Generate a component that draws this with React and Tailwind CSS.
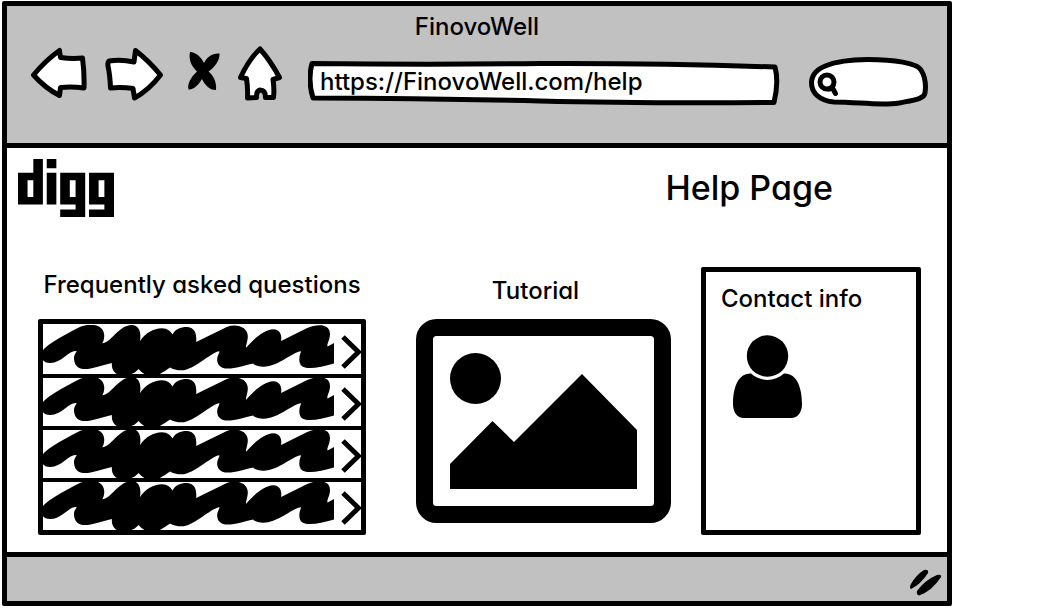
import { FaDigg } from "react-icons/fa";

const questions = ["Question 1", "Question 2", "Question 3", "Question 4"];

const outline = {
  fill: "#fff",
  stroke: "#000",
  strokeWidth: 5,
  strokeLinejoin: "round",
  strokeLinecap: "round",
};

function BackIcon() {
  return (
    <svg viewBox="31 46 57 56" className="h-14 w-[57px]" aria-hidden="true">
      <path {...outline} d="M33.500 75 Q46 60 59.500 50.500 L60.500 57.500 Q72 59 82.500 58 Q84.500 73 84 88 Q72 86.500 60.500 87.500 L59.500 95.500 Q45 88 33.500 75Z" />
    </svg>
  );
}

function ForwardIcon() {
  return (
    <svg viewBox="104 46 60 56" className="h-14 w-[60px]" aria-hidden="true">
      <path {...outline} d="M109 61 Q121 59 134 62 L135.500 50.500 Q149 61 160.500 75 Q149 90 134.500 98 L133 88.500 Q122 87 110.500 88 Q110 75 108 66 Q107.500 62 109 61Z" />
    </svg>
  );
}

function StopIcon() {
  return (
    <svg viewBox="180 46 40 56" className="h-14 w-10" aria-hidden="true">
      <path d="M190 52 C196 52 201 57 204 63 C207 57 212 53 219.500 53.500 C220 60 215 67 208.500 71.500 C213 75 217 82 216 90 C209 90 205 85 202 79 C199 84 194 90 188.500 89.500 C187 84 191 77 197 71.500 C191 66 188.500 59 190 52Z" />
    </svg>
  );
}

function HomeIcon() {
  return (
    <svg viewBox="236 46 48 56" className="h-14 w-12" aria-hidden="true">
      <path {...outline} d="M260 49 Q270 60 279.500 77.500 L273 79.500 Q274.500 89 273.500 97.500 L265.500 97.500 Q265.500 90 260 90 Q256 91 256.500 97.500 L247.500 98 Q248 88 246.500 78.500 L240.500 77.500 Q249 59 260 49Z" />
    </svg>
  );
}

function Scribble() {
  return (
    <svg viewBox="38 197 874 154" preserveAspectRatio="none" className="h-[51px] min-w-0 flex-1" aria-hidden="true">
      <path d="M36 275 C50 255 100 228 150 202 C190 188 222 200 222 230 C222 242 217 250 216 252 C245 250 262 199 305 197 C327 198 334 220 329 246 C345 222 370 207 395 207 C412 207 422 217 427 226 C435 208 455 202 472 203 C495 205 500 225 498 248 L590 203 C622 191 656 205 653 235 C652 250 646 260 648 266 C670 240 700 212 730 210 C750 211 756 227 753 245 L830 207 C862 193 900 193 900 225 C899 245 889 256 893 262 L912 251 L912 313 C880 322 850 329 828 326 C812 324 807 312 808 298 C808 287 814 278 813 276 C790 277 745 322 700 323 C685 323 672 317 669 313 C640 319 610 331 585 328 C568 326 561 315 561 300 C561 288 571 278 567 276 C545 278 490 333 455 334 C440 334 427 330 420 325 C400 338 385 351 360 351 C345 350 334 340 325 330 C315 342 300 350 275 349 C252 347 243 330 245 312 C210 320 180 332 160 330 C140 328 131 315 131 295 C132 284 138 280 139 276 C115 273 95 312 60 312 C45 312 38 306 36 300Z" />
    </svg>
  );
}

function Chevron() {
  return (
    <svg viewBox="0 0 20 34" className="mt-1 ml-[7px] h-[34px] w-5 shrink-0" aria-hidden="true">
      <path d="M2 2 L17.500 17 L2 32" fill="none" stroke="#000" strokeWidth="5" />
    </svg>
  );
}

function Picture() {
  return (
    <svg viewBox="0 0 255 204" className="h-auto w-full" role="img" aria-label="Tutorial picture">
      <rect x="8.500" y="8.500" width="238" height="187" rx="12" fill="#fff" stroke="#000" strokeWidth="17" />
      <circle cx="59.500" cy="59.500" r="25.500" />
      <path d="M34 145 L76.500 102 L98 123 L166 55 L221 111 V170 H34Z" />
    </svg>
  );
}

function Person() {
  return (
    <svg viewBox="0 0 69 83" className="ml-3 h-[83px] w-[69px]" role="img" aria-label="Contact">
      <circle cx="34.500" cy="21" r="20.700" />
      <path d="M18 38.500 C27 47 42 47 51 38.500 C64 38 69 53 69 69 C69 77 65 83 58 83 H11 C4 83 0 77 0 69 C0 53 5 38 18 38.500Z" />
    </svg>
  );
}

export default function App() {
  return (
    <div className="bg-white pt-px pr-[110px] pb-0.5 pl-0.5 font-['Inter','Open_Sans',sans-serif] text-2xl font-medium text-black [font-feature-settings:'cv11']">
      <div className="rounded-[2px] border-5 border-black bg-white">
        <header className="border-b-5 border-black bg-[#c1c1c1] pt-[5px] pb-[35px]">
          <div className="text-center leading-8">FinovoWell</div>
          <div className="flex items-start pt-[3px] pr-[18px] pl-6">
            <nav aria-label="Browser" className="flex shrink-0 gap-4">
              <button type="button" aria-label="Back"><BackIcon /></button>
              <button type="button" aria-label="Forward"><ForwardIcon /></button>
              <button type="button" aria-label="Stop"><StopIcon /></button>
              <button type="button" aria-label="Home"><HomeIcon /></button>
            </nav>
            <div className="relative mt-[13px] ml-6 h-12 min-w-0 flex-1">
              <svg viewBox="308 59 472 48" preserveAspectRatio="none" className="absolute inset-0 h-full w-full" aria-hidden="true">
                <path {...outline} d="M312 63.500 Q430 65 540 63.500 Q660 63 775 67 Q779 82 774 102.500 Q640 103.500 540 101 Q430 98.500 313 98 Q307.500 80 312 63.500Z" />
              </svg>
              <input
                type="text"
                aria-label="Address"
                defaultValue="https://FinovoWell.com/help"
                className="relative h-11 w-full bg-transparent px-3 leading-8 outline-none"
              />
            </div>
            <div className="relative mt-2.5 ml-7 h-[52px] w-[121px] shrink-0">
              <svg viewBox="808 56 121 52" className="absolute inset-0 h-full w-full" aria-hidden="true">
                <path {...outline} d="M834 102 C820 101 811.500 93 811.500 83 C811.500 67 833 60 868 59.500 C894 59.500 917 63 921 70 C926 78 926 86 925 93 C924 99 914 100 899 103 C880 106 858 102 834 102Z" />
                <circle cx="827" cy="82" r="7" {...outline} />
                <path d="M829 89 L832.500 88 L835.500 93.500" {...outline} fill="none" />
              </svg>
              <input type="search" aria-label="Search" className="relative h-full w-full bg-transparent pr-4 pl-8 text-base outline-none" />
            </div>
          </div>
        </header>

        <main className="pt-[11px] pb-[17px]">
          <div className="flex items-center justify-between pr-[114px] pl-[11px]">
            <a href="#digg" aria-label="Digg">
              <FaDigg viewBox="0 96 512 320" preserveAspectRatio="none" className="h-[58px] w-24" />
            </a>
            <h1 className="text-[34px] leading-10">Help Page</h1>
          </div>

          <div className="mt-[50px] grid grid-cols-[328fr_305fr_250fr] pr-[26px] pl-[31px]">
            <section className="min-w-0">
              <h2 className="mb-4 text-center leading-9 whitespace-nowrap">Frequently asked questions</h2>
              <ul className="divide-y-4 divide-black rounded-[2px] border-5 border-black pt-0.5">
                {questions.map((question) => (
                  <li key={question}>
                    <button type="button" aria-label={question} className="flex h-12 w-full items-center">
                      <Scribble />
                      <Chevron />
                    </button>
                  </li>
                ))}
              </ul>
            </section>

            <section className="min-w-0 pt-1.5 pl-[50px]">
              <h2 className="mb-2.5 pr-4 text-center leading-9">Tutorial</h2>
              <Picture />
            </section>

            <section className="flex min-w-0 pl-[30px]">
              <div className="min-w-0 flex-1 rounded-[2px] border-5 border-black px-[15px] pt-[9px]">
                <h2 className="mb-[18px] leading-9 whitespace-nowrap">Contact info</h2>
                <Person />
              </div>
            </section>
          </div>
        </main>

        <footer className="flex h-[49px] items-end justify-end border-t-5 border-black bg-[#c1c1c1] pr-1 pb-1">
          <svg viewBox="911 569 33 28" className="h-7 w-[33px]" aria-hidden="true">
            <path d="M925 570 Q930 569 929 573 Q922 584 912 589 Q910 588 912 584 Q917 575 925 570Z M938 575 Q943 574 942 577 Q933 591 920 595.500 Q917 595 918 591 Q926 580 938 575Z" />
          </svg>
        </footer>
      </div>
    </div>
  );
}
